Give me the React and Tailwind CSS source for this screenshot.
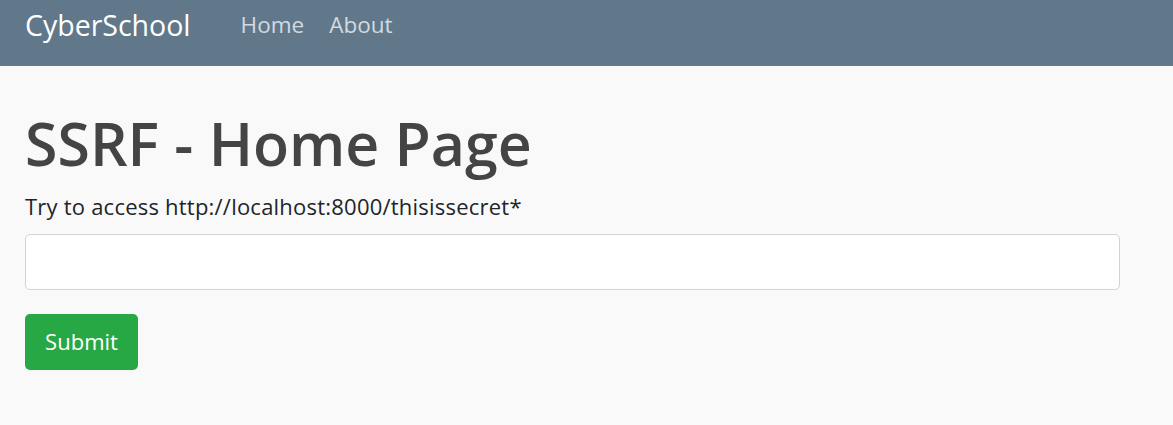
export default function App() {
  return (
    <div className="min-h-[425px] bg-[#f9f9f9]" style={{ fontFamily: '"Open Sans", "Noto Sans", sans-serif' }}>
      <nav className="h-[66px] bg-[#60788a] flex items-center px-[25px] pb-[16px]">
        <span className="text-white text-[28.5px] mr-[50px]">CyberSchool</span>
        <span className="text-[#d2dae0] text-[22.5px] mr-[25px]">Home</span>
        <span className="text-[#d2dae0] text-[22.5px]">About</span>
      </nav>
      <main className="px-[25px] pt-[42px]">
        <h1 className="text-[#444444] text-[59px] font-semibold leading-[1.2]">SSRF - Home Page</h1>
        <p className="text-[#212529] text-[22px] leading-[1.5] mt-[11px] tracking-[0.22px]">Try to access http://localhost:8000/thisissecret*</p>
        <input className="block mt-[11px] w-[1095px] h-[56px] bg-white border border-[#ced4da] rounded-[5px]" />
        <button className="mt-[24px] h-[56px] w-[113px] bg-[#28a745] text-white text-[22px] rounded-[5px]">Submit</button>
      </main>
    </div>
  );
}
